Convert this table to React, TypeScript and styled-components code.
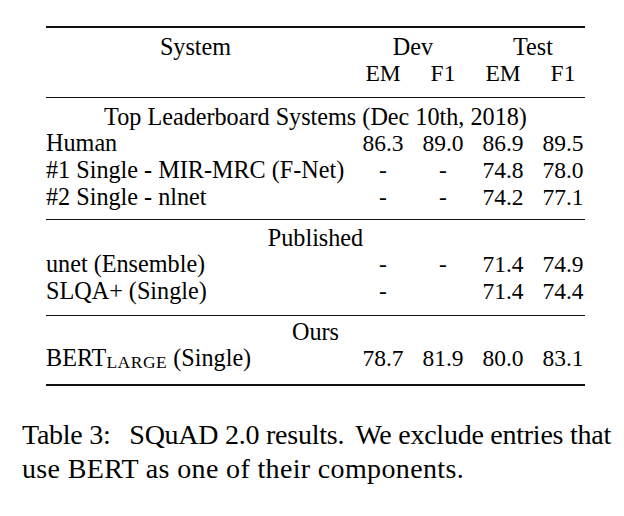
import styled, { createGlobalStyle } from "styled-components";

const GlobalStyle = createGlobalStyle`
  html, body {
    margin: 0;
    padding: 0;
    background: #fff;
  }
  body {
    font-family: "Liberation Serif", "Times New Roman", serif;
    color: #000;
  }
`;

const COLS = "299px repeat(4, 44px)";

const Figure = styled.figure`
  margin: 0;
  padding: 26px 0 0 22px;
`;

const Table = styled.div`
  width: 539px;
  margin-left: 24px;
  border-top: 2px solid #111;
  border-bottom: 2px solid #111;
  font-size: 24.2px;
  line-height: 26.7px;
`;

const Section = styled.div<{ $ruled?: boolean; $top: number; $bottom: number }>`
  display: grid;
  grid-template-columns: ${COLS};
  column-gap: 16px;
  padding: ${(p) => p.$top}px 0 ${(p) => p.$bottom}px;
  border-top: ${(p) => (p.$ruled ? "1px solid #111" : "none")};
`;

const Cell = styled.div<{ $align?: "left" | "center"; $span?: number }>`
  text-align: ${(p) => p.$align ?? "center"};
  grid-column: ${(p) => (p.$span ? `span ${p.$span}` : "auto")};
  white-space: nowrap;
`;

const Num = styled(Cell)`
  font-size: 23.5px;
`;

const Sub = styled.span`
  font-size: 17.5px;
  letter-spacing: 0.5px;
  position: relative;
  top: 2px;
`;

const Caption = styled.figcaption`
  width: 592px;
  margin-top: 32px;
  font-size: 28px;
  line-height: 34px;
`;

const CaptionLine = styled.span<{ $spacing: number }>`
  display: block;
  white-space: nowrap;
  letter-spacing: ${(p) => p.$spacing}px;
`;

const Spaced = styled.span<{ $after: number }>`
  margin-right: ${(p) => p.$after}px;
`;

type Row = { name: React.ReactNode; vals: string[] };

const leaderboard: Row[] = [
  { name: "Human", vals: ["86.3", "89.0", "86.9", "89.5"] },
  { name: "#1 Single - MIR-MRC (F-Net)", vals: ["-", "-", "74.8", "78.0"] },
  { name: "#2 Single - nlnet", vals: ["-", "-", "74.2", "77.1"] },
];

const published: Row[] = [
  { name: "unet (Ensemble)", vals: ["-", "-", "71.4", "74.9"] },
  { name: "SLQA+ (Single)", vals: ["-", "", "71.4", "74.4"] },
];

const ours: Row[] = [
  {
    name: (
      <>
        BERT<Sub>LARGE</Sub> (Single)
      </>
    ),
    vals: ["78.7", "81.9", "80.0", "83.1"],
  },
];

const Row = ({ row }: { row: Row }) => (
  <>
    <Cell $align="left">{row.name}</Cell>
    {row.vals.map((v, i) => (
      <Num key={i}>{v}</Num>
    ))}
  </>
);

const Rows = ({ rows }: { rows: Row[] }) => (
  <>
    {rows.map((r, i) => (
      <Row key={i} row={r} />
    ))}
  </>
);

export default function App() {
  return (
    <>
      <GlobalStyle />
      <Figure>
        <Table>
          <Section $top={5.5} $bottom={9.6}>
            <Cell>System</Cell>
            <Cell $span={2}>Dev</Cell>
            <Cell $span={2}>Test</Cell>
            <Cell />
            <Num>EM</Num>
            <Num>F1</Num>
            <Num>EM</Num>
            <Num>F1</Num>
          </Section>
          <Section $ruled $top={6} $bottom={8.2}>
            <Cell $span={5}>Top Leaderboard Systems (Dec 10th, 2018)</Cell>
            <Rows rows={leaderboard} />
          </Section>
          <Section $ruled $top={5} $bottom={9.9}>
            <Cell $span={5}>Published</Cell>
            <Rows rows={published} />
          </Section>
          <Section $ruled $top={3} $bottom={10}>
            <Cell $span={5}>Ours</Cell>
            <Rows rows={ours} />
          </Section>
        </Table>
        <Caption>
          <CaptionLine $spacing={-0.25}>
            <Spaced $after={12}>Table 3:</Spaced> <Spaced $after={5}>SQuAD 2.0 results.</Spaced> We
            exclude entries that
          </CaptionLine>
          <CaptionLine $spacing={0.35}>use BERT as one of their components.</CaptionLine>
        </Caption>
      </Figure>
    </>
  );
}
